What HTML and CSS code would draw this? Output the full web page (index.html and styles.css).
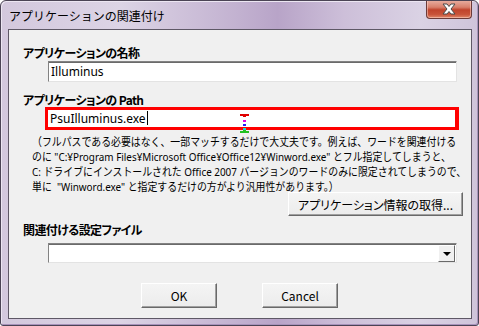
FILE: index.html
```html
<!DOCTYPE html>
<html lang="ja">
<head>
    <meta charset="UTF-8">
    <title>アプリケーションの関連付け</title>
    <link rel="stylesheet" href="styles.css">
</head>
<body>
    <div class="window">
        <!-- title bar -->
        <div class="titlebar">
            <span class="title">アプリケーションの関連付け</span>
            <div class="close">
                <svg width="16" height="12" viewBox="0 0 16 12">
                    <path d="M2 1 L6 1 L8 3.5 L10 1 L14 1 L10 6 L14 11 L10 11 L8 8.5 L6 11 L2 11 L6 6 Z" fill="#fff" stroke="#4a4a4a" stroke-width="1"/>
                </svg>
            </div>
        </div>

        <!-- dialog body -->
        <div class="client">
            <div class="label first">アプリケーションの名称</div>
            <div class="field">Illuminus</div>

            <div class="label">アプリケーションの Path</div>
            <div class="field path">PsuIlluminus.exe<span class="caret"></span>
                <span class="ibeam"></span>
            </div>

            <p class="note">（フルパスである必要はなく、一部マッチするだけで大丈夫です。例えば、ワードを関連付ける<br>のに "C:¥Program Files¥Microsoft Office¥Office12¥Winword.exe" とフル指定してしまうと、<br>C: ドライブにインストールされた Office 2007 バージョンのワードのみに限定されてしまうので、<br>単に&nbsp;&nbsp;"Winword.exe" と指定するだけの方がより汎用性があります。）</p>

            <div class="row-right">
                <button class="btn wide" type="button">アプリケーション情報の取得...</button>
            </div>

            <div class="label third">関連付ける設定ファイル</div>
            <div class="field combo">
                <span class="arrow"></span>
            </div>

            <div class="actions">
                <button class="btn" type="button">OK</button>
                <button class="btn" type="button">Cancel</button>
            </div>
        </div>
    </div>
</body>
</html>
```

FILE: styles.css
```css
body {
    margin: 0;
    font-family: "Noto Sans CJK JP", "Liberation Sans", sans-serif;
    color: #000;
    background: #fff;
}
.window {
    width: 479px;
    height: 326px;
    box-sizing: border-box;
    border: 1px solid #4b4455;
    border-radius: 6px 6px 3px 3px;
    background: linear-gradient(90deg, #d3c8dd 0%, #dcd4e5 25%, #c2b1d0 50%, #b8a4c8 58%, #cdbfd9 72%, #dad2e4 88%, #cfc4da 100%);
    box-shadow: inset 1px 1px #ece6f2, inset -1px -1px #a893bb;
    overflow: hidden;
}
.titlebar {
    height: 28px;
    display: flex;
    align-items: center;
    justify-content: space-between;
    padding-left: 8px;
}
.title {
    font-size: 12px;
    line-height: 16px;
    margin-top: 1px;
}
.close {
    width: 46px;
    height: 19px;
    align-self: flex-start;
    margin-right: 6px;
    margin-top: -1px;
    box-sizing: border-box;
    border: 1px solid #6b3a38;
    border-top: none;
    border-radius: 0 0 4px 4px;
    background: linear-gradient(#e9b1a4 0%, #d8806c 40%, #c0432c 55%, #c85339 80%, #e0876a 100%);
    box-shadow: inset 0 0 0 1px rgba(255, 220, 210, 0.5);
    display: flex;
    align-items: center;
    justify-content: center;
}
.client {
    margin: 0 6px 0 7px;
    height: 290px;
    box-sizing: border-box;
    border: 1px solid #5e5866;
    background: #f0f0f0;
    padding: 0 8px 0 14px;
}
.label {
    font-size: 12px;
    font-weight: bold;
    line-height: 14px;
    height: 14px;
    margin-top: 11px;
    letter-spacing: -0.6px;
    font-feature-settings: "palt";
}
.label.first {
    margin-top: 16px;
}
.label.third {
    margin-top: 7px;
}
.field {
    margin: 1px 6px 0 25px;
    height: 21px;
    box-sizing: border-box;
    background: #fff;
    border: 1px solid;
    border-color: #828282 #e3e3e3 #e3e3e3 #828282;
    box-shadow: inset 0 1px #6a6a6a;
    font-size: 12px;
    line-height: 19px;
    padding-left: 2px;
    font-family: "Noto Sans", "Liberation Sans", sans-serif;
}
.field.path {
    position: relative;
    margin: 0 4px 0 22px;
    height: 23px;
    border: 3px solid #ff0000;
    border-right-width: 4px;
    box-shadow: none;
    line-height: 17px;
    padding-left: 2px;
}
.caret {
    display: inline-block;
    width: 1px;
    height: 14px;
    background: #000;
    vertical-align: -2px;
    margin-left: 1px;
}
.ibeam {
    position: absolute;
    left: 195px;
    top: 4px;
    width: 3px;
    height: 19px;
    background: linear-gradient(#e00000 0 3px, transparent 3px 6px, #e000e0 6px 8px, transparent 8px 10px, #2020ff 10px 12px, transparent 12px 14px, #20d0d0 14px 16px, #20c020 16px 19px);
}
.ibeam::before,
.ibeam::after {
    content: "";
    position: absolute;
    left: -3px;
    width: 9px;
    height: 2px;
}
.ibeam::before {
    top: 0;
    background: #e00000;
}
.ibeam::after {
    bottom: 0;
    background: #20c020;
}
.note {
    margin: 4px 0 0 9px;
    font-family: "Noto Sans", "Noto Sans CJK JP", sans-serif;
    font-size: 11.5px;
    line-height: 15px;
    white-space: nowrap;
    transform: scaleX(0.86);
    transform-origin: left top;
}
.row-right {
    display: flex;
    justify-content: flex-end;
    margin-top: -2px;
}
.btn {
    height: 25px;
    width: 76px;
    box-sizing: border-box;
    background: linear-gradient(#f4f4f4, #ececec);
    border: 1px solid;
    border-color: #ffffff #696969 #696969 #ffffff;
    box-shadow: inset -1px -1px #a0a0a0;
    font-family: "Noto Sans CJK JP", "Liberation Sans", sans-serif;
    font-size: 12px;
    color: #000;
    padding: 0;
    font-feature-settings: "palt";
}
.btn.wide {
    width: 175px;
    height: 24px;
}
.combo {
    margin-top: 6px;
    height: 20px;
    position: relative;
}
.arrow {
    position: absolute;
    right: 1px;
    top: 1px;
    width: 17px;
    height: 17px;
    box-sizing: border-box;
    background: #f0f0f0;
    border: 1px solid;
    border-color: #ffffff #696969 #696969 #ffffff;
}
.arrow::after {
    content: "";
    position: absolute;
    left: 4px;
    top: 6px;
    border-left: 4px solid transparent;
    border-right: 4px solid transparent;
    border-top: 4px solid #000;
}
.actions {
    display: flex;
    gap: 45px;
    margin: 20px 0 0 118px;
}
```
